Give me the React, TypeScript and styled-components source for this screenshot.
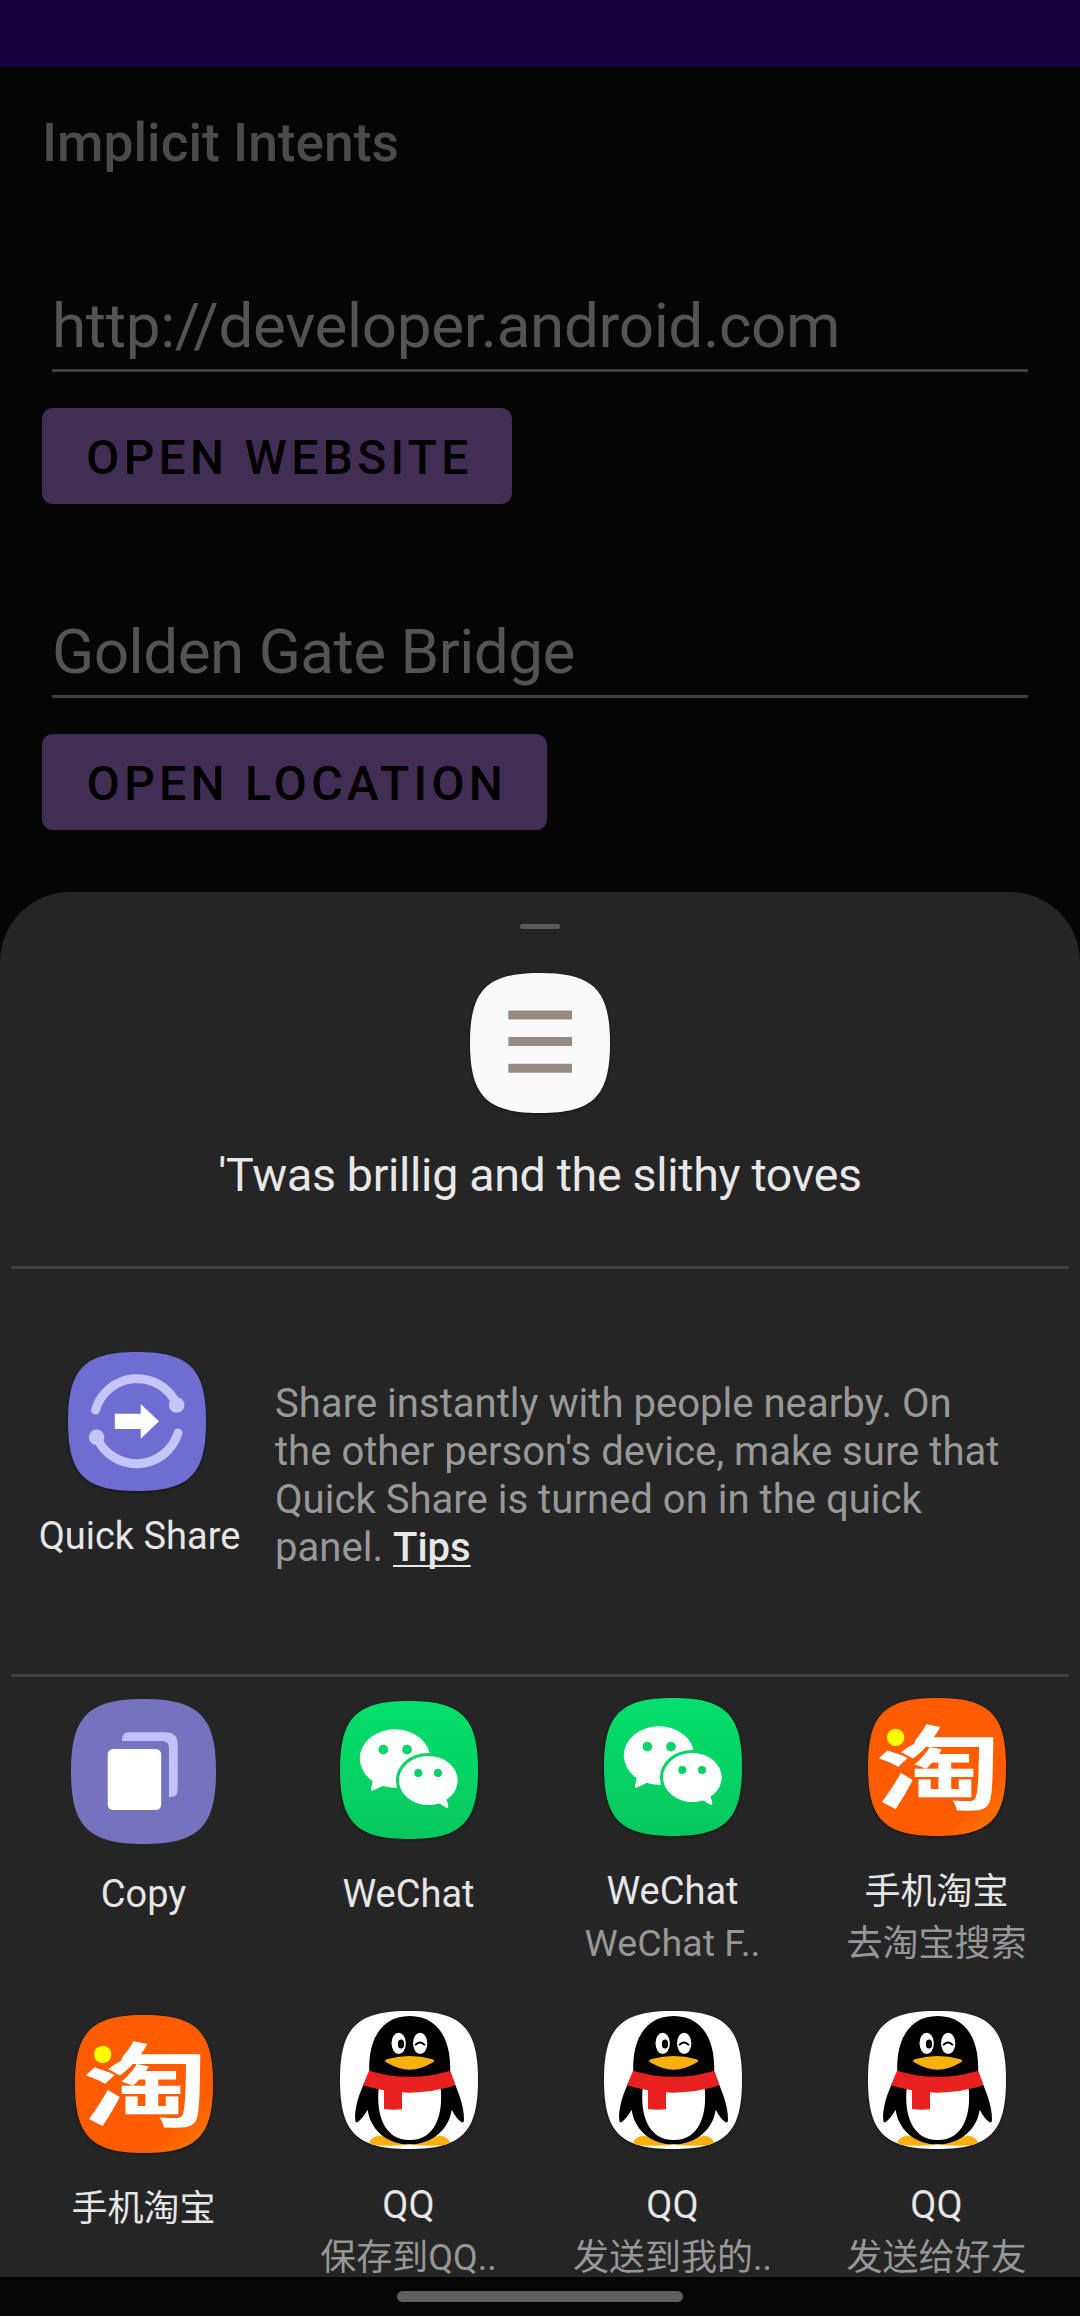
import React from "react";
import styled, { createGlobalStyle } from "styled-components";

const GlobalStyle = createGlobalStyle`
  *, *::before, *::after { box-sizing: border-box; }
  body {
    margin: 0;
    background: #050505;
    font-family: Roboto, "Noto Sans CJK SC", sans-serif;
  }
`;

const SQUIRCLE =
  "M50 0C12 0 0 12 0 50C0 88 12 100 50 100C88 100 100 88 100 50C100 12 88 0 50 0Z";

const Screen = styled.div`
  width: 1080px;
  height: 2316px;
  display: flex;
  flex-direction: column;
  background: #050505;
  overflow: hidden;
`;

const StatusBar = styled.div`
  flex: none;
  height: 67px;
  background: #14003e;
`;

const Page = styled.main`
  flex: none;
  height: 825px;
  padding: 44px 42px 0;
  display: flex;
  flex-direction: column;
  align-items: flex-start;
`;

const Title = styled.h1`
  flex: none;
  margin: 0 0 109px;
  font-size: 53.3px;
  line-height: 64px;
  font-weight: 500;
  color: #4b4b4b;
`;

const Field = styled.div<{ $tracking: number }>`
  flex: none;
  width: 976px;
  height: 88px;
  margin: 0 0 36px 10px;
  border-bottom: 3px solid #404040;
  color: #545454;
  font-size: 62px;
  line-height: 84px;
  letter-spacing: ${(p) => p.$tracking}px;
`;

const ActionButton = styled.button<{ $width: number }>`
  flex: none;
  width: ${(p) => p.$width}px;
  height: 96px;
  margin: 0 0 106px;
  padding: 3px 0 0 5px;
  border: 0;
  border-radius: 11px;
  background: #412e55;
  color: #000;
  font-family: inherit;
  font-size: 48px;
  line-height: 56px;
  font-weight: 500;
  letter-spacing: 4.3px;
  white-space: nowrap;
`;

const Sheet = styled.section`
  flex: none;
  height: 1385px;
  display: flex;
  flex-direction: column;
  align-items: center;
  background: #252525;
  border-radius: 70px 70px 0 0;
  overflow: hidden;
`;

const Handle = styled.div`
  flex: none;
  width: 40px;
  height: 5px;
  margin-top: 32px;
  border-radius: 3px;
  background: #5c5c5c;
`;

const Preview = styled.div`
  flex: none;
  height: 337px;
  padding-top: 44px;
  display: flex;
  flex-direction: column;
  align-items: center;
`;

const PreviewText = styled.div`
  margin-top: 34px;
  font-size: 46.5px;
  line-height: 56px;
  letter-spacing: -0.3px;
  color: #e8e8e8;
  white-space: nowrap;
`;

const Divider = styled.div`
  flex: none;
  width: 1058px;
  height: 3px;
  background: #404040;
`;

const QuickShareRow = styled.div`
  flex: none;
  width: 100%;
  height: 405px;
  display: flex;
  align-items: flex-start;
`;

const QuickShareApp = styled.div`
  width: 275px;
  padding-top: 83px;
  padding-left: 68px;
  display: flex;
  flex-direction: column;
  align-items: flex-start;
`;

const QuickShareLabel = styled.div`
  width: 275px;
  margin: 22px 0 0 -67px;
  padding-left: 2px;
  text-align: center;
  font-size: 38px;
  line-height: 46px;
  color: #e6e6e6;
  white-space: nowrap;
`;

const Hint = styled.p`
  margin: 0;
  width: 735px;
  padding-top: 111px;
  font-size: 40.1px;
  line-height: 48px;
  color: #999;
`;

const Tips = styled.a`
  color: #e8e8e8;
  font-weight: 500;
  text-decoration: underline;
  text-decoration-thickness: 2px;
  text-underline-offset: 4px;
  text-decoration-skip-ink: none;
`;

const Grid = styled.div`
  flex: none;
  align-self: flex-start;
  margin-left: 12px;
  display: grid;
  grid-template-columns: 263px 267px 261px 267px;
  grid-auto-rows: 314px;
`;

const Cell = styled.div<{ $top: number }>`
  padding-top: ${(p) => p.$top}px;
  display: flex;
  flex-direction: column;
  align-items: center;
`;

const Label = styled.div<{ $size: number; $gap: number; $muted?: boolean }>`
  margin-top: ${(p) => p.$gap}px;
  font-size: ${(p) => p.$size}px;
  line-height: 46px;
  height: 46px;
  color: ${(p) => (p.$muted ? "#979797" : "#e6e6e6")};
  white-space: nowrap;
`;

const NavBar = styled.nav`
  flex: none;
  height: 39px;
  padding-top: 14px;
  display: flex;
  justify-content: center;
  background: #060606;
`;

const NavPill = styled.div`
  width: 286px;
  height: 11px;
  border-radius: 6px;
  background: #5e5e5e;
`;

const IconSvg = styled.svg<{ $shadow?: boolean }>`
  display: block;
  flex: none;
  overflow: visible;
  filter: ${(p) => (p.$shadow ? "drop-shadow(0 1px 1.5px rgba(0, 0, 0, 0.45))" : "none")};
`;

function NoteIcon() {
  return (
    <IconSvg $shadow width="140" height="140" viewBox="0 0 140 140">
      <path d={SQUIRCLE} transform="scale(1.4)" fill="#fafafa" />
      <path d="M38.3 37.5h63.7v9H38.3zM38.3 64h63.7v9H38.3zM38.3 90.7h63.7v9H38.3z" fill="#978a80" />
    </IconSvg>
  );
}

function QuickShareIcon() {
  return (
    <IconSvg $shadow width="138" height="139" viewBox="0 0 138 139">
      <path d={SQUIRCLE} transform="scale(1.38 1.39)" fill="#6f6dd1" />
      <g fill="none" stroke="#c6c4fb" strokeWidth="9" strokeLinecap="round">
        <path d="M27.5 58A43.3 43.3 0 0 1 108.5 52" />
        <path d="M110 81A43.3 43.3 0 0 1 29 86" />
      </g>
      <circle cx="108.7" cy="53" r="7.8" fill="#c6c4fb" />
      <circle cx="28.6" cy="85.3" r="7.8" fill="#c6c4fb" />
      <path d="M46.8 61.8H72.7V52L91 69.3L72.7 86.7V77H46.8Z" fill="#fff" />
    </IconSvg>
  );
}

function CopyIcon() {
  return (
    <IconSvg width="145" height="145" viewBox="0 0 145 145">
      <path d={SQUIRCLE} transform="scale(1.45)" fill="#7772be" />
      <path
        d="M51 42V40.3Q51 33.3 58 33.3H94.5Q106.7 33.3 106.7 45.5V91Q106.7 98 100 98H98V49Q98 42 91 42Z"
        fill="#c4bfff"
      />
      <rect x="36.7" y="50" width="53.5" height="61" rx="5.5" fill="#fff" />
    </IconSvg>
  );
}

function WeChatIcon() {
  return (
    <IconSvg $shadow width="138" height="138" viewBox="0 0 414 414">
      <defs>
        <linearGradient id="wechat-bg" x1="0" y1="0" x2="0" y2="1">
          <stop offset="0" stopColor="#04df6d" />
          <stop offset="1" stopColor="#07c75f" />
        </linearGradient>
        <mask id="wechat-cut">
          <rect width="414" height="414" fill="#fff" />
          <ellipse cx="264.5" cy="238" rx="96.5" ry="82" fill="#000" />
        </mask>
      </defs>
      <path d={SQUIRCLE} transform="scale(4.14)" fill="url(#wechat-bg)" />
      <g mask="url(#wechat-cut)">
        <ellipse cx="165" cy="172.5" rx="105.5" ry="88" fill="#fff" />
        <path d="M100 232L93 264Q93 271 100 268L128 255L150 240Z" fill="#fff" />
        <circle cx="130" cy="146" r="14.5" fill="#05d568" />
        <circle cx="201" cy="146" r="14.5" fill="#05d568" />
      </g>
      <ellipse cx="265" cy="238.5" rx="88" ry="73.5" fill="#fff" />
      <path d="M318 288L325 315Q326 322 319 320L297 307L280 295Z" fill="#fff" />
      <circle cx="235" cy="216" r="12" fill="#05d166" />
      <circle cx="294" cy="216" r="12" fill="#05d166" />
    </IconSvg>
  );
}

const TaobaoGlyph = styled.text`
  font-family: "Noto Sans CJK SC", sans-serif;
  font-weight: 700;
  font-size: 280px;
  fill: #fff;
`;

function TaobaoIcon() {
  return (
    <IconSvg $shadow width="138" height="138" viewBox="0 0 414 414">
      <defs>
        <linearGradient id="taobao-bg" x1="0" y1="0" x2="1" y2="1">
          <stop offset="0.76" stopColor="#ff5b00" />
          <stop offset="0.97" stopColor="#ff7d00" />
        </linearGradient>
      </defs>
      <path d={SQUIRCLE} transform="scale(4.14)" fill="url(#taobao-bg)" />
      <TaobaoGlyph transform="translate(23 313) scale(1.34 0.98)">淘</TaobaoGlyph>
      <path d="M40 72L122 62L152 98L138 138L110 152L40 130Z" fill="#ff5b00" />
      <circle cx="83" cy="118" r="26" fill="#ffff00" />
    </IconSvg>
  );
}

function QQIcon() {
  return (
    <IconSvg $shadow width="138" height="138" viewBox="0 0 414 414">
      <defs>
        <clipPath id="qq-clip">
          <path d={SQUIRCLE} transform="scale(4.14)" />
        </clipPath>
      </defs>
      <path d={SQUIRCLE} transform="scale(4.14)" fill="#fff" />
      <g clipPath="url(#qq-clip)">
        <path d="M86 397C92 382 104 374 122 374L205 402Q150 406 100 403Z" fill="#fab00c" />
        <path d="M332 397C326 382 314 374 296 374L213 402Q268 406 318 403Z" fill="#fab00c" />
        <path
          d="M70 222C52 262 43 300 46 327Q47 338 53 333Q68 322 83 296C90 350 135 400 208 400C281 400 328 350 335 296Q350 324 364 333Q371 338 372 327C373 300 363 262 346 222Z"
          fill="#000"
        />
        <path d="M116 230C108 310 132 387 209 387C286 387 310 310 302 230Z" fill="#fff" />
        <path d="M88 190C82 80 128 15 209 15C290 15 336 80 330 190Q209 225 88 190Z" fill="#000" />
        <path d="M132 232H186V295Q160 298 132 294Z" fill="#e82020" />
        <path d="M87 179Q209 216 331 179L347 223Q208 267 69 223Z" fill="#e82020" />
        <ellipse cx="176" cy="97" rx="21.5" ry="32" fill="#fff" />
        <ellipse cx="240.5" cy="97" rx="21.5" ry="32" fill="#fff" />
        <ellipse cx="183" cy="99" rx="9.5" ry="13.5" fill="#000" />
        <path d="M227 101Q240 88 253 101" fill="none" stroke="#000" strokeWidth="5.5" strokeLinecap="round" />
        <path d="M135 150Q136 146 143 144Q209 126 275 144Q282 146 283 150Q281 154 274 157Q209 195 144 157Q137 154 135 150Z" fill="#fab00c" />
      </g>
    </IconSvg>
  );
}

type IconKind = "copy" | "wechat" | "taobao" | "qq";

interface Target {
  icon: IconKind;
  label: string;
  size: number;
  top: number;
  gap: number;
  sub?: string;
  subSize?: number;
  subGap?: number;
}

const ICONS: Record<IconKind, () => React.ReactElement> = {
  copy: CopyIcon,
  wechat: WeChatIcon,
  taobao: TaobaoIcon,
  qq: QQIcon,
};

const TARGETS: Target[] = [
  { icon: "copy", label: "Copy", size: 38, top: 22, gap: 27 },
  { icon: "wechat", label: "WeChat", size: 38, top: 24, gap: 32 },
  { icon: "wechat", label: "WeChat", size: 38, top: 21, gap: 32, sub: "WeChat F..", subSize: 37.5 },
  { icon: "taobao", label: "手机淘宝", size: 36, top: 21, gap: 33, sub: "去淘宝搜索", subSize: 36 },
  { icon: "taobao", label: "手机淘宝", size: 36, top: 24, gap: 33 },
  { icon: "qq", label: "QQ", size: 38, top: 20, gap: 33, sub: "保存到QQ..", subSize: 36, subGap: 7 },
  { icon: "qq", label: "QQ", size: 38, top: 20, gap: 33, sub: "发送到我的..", subSize: 36, subGap: 7 },
  { icon: "qq", label: "QQ", size: 38, top: 20, gap: 33, sub: "发送给好友", subSize: 36, subGap: 7 },
];

export default function App() {
  return (
    <>
      <GlobalStyle />
      <Screen>
        <StatusBar />
        <Page>
          <Title>Implicit Intents</Title>
          <Field $tracking={-0.35}>http://developer.android.com</Field>
          <ActionButton $width={470}>OPEN WEBSITE</ActionButton>
          <Field $tracking={-0.5}>Golden Gate Bridge</Field>
          <ActionButton $width={505}>OPEN LOCATION</ActionButton>
        </Page>
        <Sheet>
          <Handle />
          <Preview>
            <NoteIcon />
            <PreviewText>'Twas brillig and the slithy toves</PreviewText>
          </Preview>
          <Divider />
          <QuickShareRow>
            <QuickShareApp>
              <QuickShareIcon />
              <QuickShareLabel>Quick Share</QuickShareLabel>
            </QuickShareApp>
            <Hint>
              Share instantly with people nearby. On the other person's device, make sure that Quick
              Share is turned on in the quick panel. <Tips>Tips</Tips>
            </Hint>
          </QuickShareRow>
          <Divider />
          <Grid>
            {TARGETS.map((t, i) => {
              const Icon = ICONS[t.icon];
              return (
                <Cell key={i} $top={t.top}>
                  <Icon />
                  <Label $size={t.size} $gap={t.gap}>{t.label}</Label>
                  {t.sub && (
                    <Label $muted $size={t.subSize ?? 36} $gap={t.subGap ?? 6}>{t.sub}</Label>
                  )}
                </Cell>
              );
            })}
          </Grid>
        </Sheet>
        <NavBar>
          <NavPill />
        </NavBar>
      </Screen>
    </>
  );
}
